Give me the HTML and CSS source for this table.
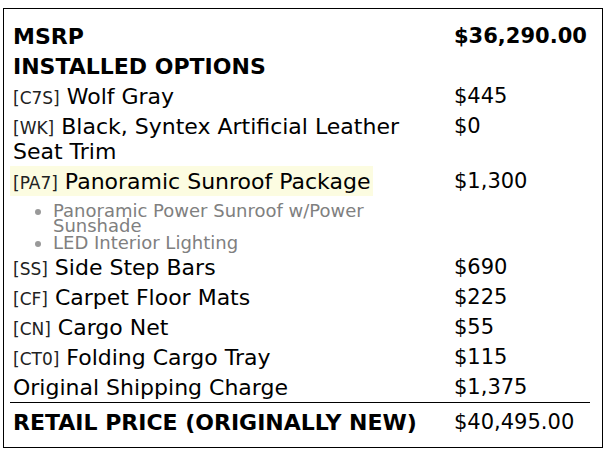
FILE: index.html
```html
<!DOCTYPE html>
<html>
<head>
<meta charset="utf-8">
<link rel="stylesheet" href="styles.css">
</head>
<body>
<div class="sticker">
  <div class="cell label bold">MSRP</div>
  <div class="cell price bold">$36,290.00</div>

  <div class="cell label bold">INSTALLED OPTIONS</div>
  <div class="cell price"></div>

  <div class="cell label"><span class="code">[C7S]</span> Wolf Gray</div>
  <div class="cell price">$445</div>

  <div class="cell label"><span class="code">[WK]</span> Black, Syntex Artificial Leather Seat Trim</div>
  <div class="cell price">$0</div>

  <div class="cell label"><span class="hl"><span class="code">[PA7]</span> Panoramic Sunroof Package</span></div>
  <div class="cell price">$1,300</div>

  <ul class="subs">
    <li>Panoramic Power Sunroof w/Power Sunshade</li>
    <li>LED Interior Lighting</li>
  </ul>

  <div class="cell label"><span class="code">[SS]</span> Side Step Bars</div>
  <div class="cell price">$690</div>

  <div class="cell label"><span class="code">[CF]</span> Carpet Floor Mats</div>
  <div class="cell price">$225</div>

  <div class="cell label"><span class="code">[CN]</span> Cargo Net</div>
  <div class="cell price">$55</div>

  <div class="cell label"><span class="code">[CT0]</span> Folding Cargo Tray</div>
  <div class="cell price">$115</div>

  <div class="cell label">Original Shipping Charge</div>
  <div class="cell price">$1,375</div>

  <div class="cell label bold total">RETAIL PRICE (ORIGINALLY NEW)</div>
  <div class="cell price total">$40,495.00</div>
</div>
</body>
</html>
```
FILE: styles.css
```css
html, body {
  margin: 0;
  padding: 0;
  background: #fff;
}
body {
  padding: 8px 3px 0 3px;
  font-family: "DejaVu Sans", sans-serif;
  color: #000;
}
.sticker {
  display: grid;
  grid-template-columns: 441px 139px;
  align-content: start;
  padding: 12px 12px 0 6px;
  box-sizing: border-box;
  width: 600px;
  height: 440px;
  border: 1px solid #000;
}
.cell {
  padding: 2.5px 3px;
  line-height: 25px;
}
.label {
  grid-column: 1;
  font-size: 22px;
}
.price {
  grid-column: 2;
  font-size: 21px;
}
.bold {
  font-weight: bold;
}
.code {
  font-size: 17px;
  line-height: 16px;
  color: #222;
}
.hl {
  display: inline-block;
  background: #fcfce1;
  margin: -2.5px -3px;
  padding: 2.5px 3px;
}
.subs {
  grid-column: 1;
  margin: 0;
  padding: 7px 0 0 43px;
  color: #808080;
  font-size: 18px;
  line-height: 15px;
}
.subs li {
  margin-bottom: 2px;
}
.subs li::marker {
  color: #999;
}
.total {
  border-top: 1px solid #000;
  padding-top: 7px;
}
```
